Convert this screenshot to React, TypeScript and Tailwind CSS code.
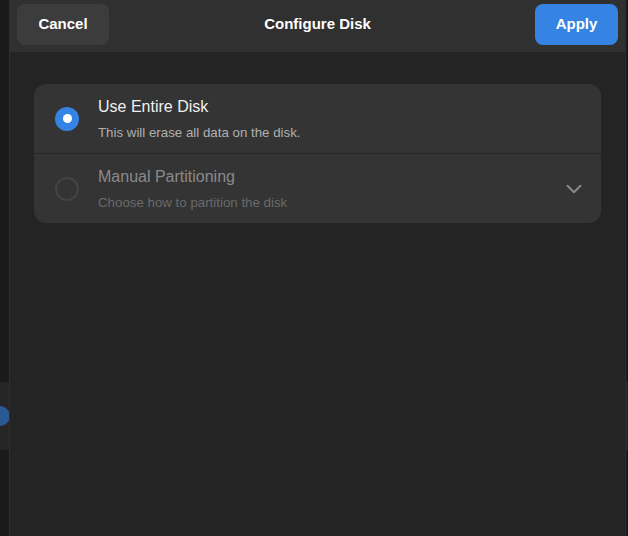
import { ChevronDown } from "lucide-react";

const font = { fontFamily: '"Liberation Sans", Arial, sans-serif' };

interface OptionRowProps {
  title: string;
  subtitle: string;
  selected?: boolean;
  disabled?: boolean;
  expandable?: boolean;
}

function OptionRow({ title, subtitle, selected, disabled, expandable }: OptionRowProps) {
  return (
    <div className="flex items-center h-[69px] pl-[21px] pr-[14px]">
      {selected ? (
        <div className="w-6 h-6 rounded-full bg-[#3584e4] flex items-center justify-center shrink-0">
          <div className="w-[9px] h-[9px] rounded-full bg-white" />
        </div>
      ) : (
        <div className="w-6 h-6 rounded-full border-2 border-[#444444] shrink-0" />
      )}
      <div className="ml-[19px] flex-1 flex flex-col">
        <span className={disabled ? "text-[16px] leading-[19px] text-[#8a8a8a]" : "text-[16px] leading-[19px] text-[#f0f0f0]"}>
          {title}
        </span>
        <span className={disabled ? "mt-[9px] text-[13.3px] leading-[15px] text-[#6a6a6a]" : "mt-[9px] text-[13.3px] leading-[15px] text-[#b0b0b0]"}>
          {subtitle}
        </span>
      </div>
      {expandable && <ChevronDown className="w-[26px] h-[26px] text-[#8a8a8a]" strokeWidth={1.8} />}
    </div>
  );
}

export default function App() {
  return (
    <div className="relative w-[628px] h-[536px] bg-[#1a1a1a] overflow-hidden" style={font}>
      {/* list row behind the dialog */}
      <div className="absolute left-0 right-0 top-[382px] h-[68px] bg-[#262626] flex items-center">
        <div className="-ml-[10px] w-5 h-5 rounded-full bg-[#2a5a96]" />
      </div>

      {/* dialog */}
      <div className="absolute left-[9px] top-0 w-[617px] h-[536px] bg-[#242424] border-x border-[#2e2e2e] flex flex-col">
        <div className="h-[52px] bg-[#303030] grid grid-cols-[1fr_auto_1fr] items-center px-[7px] pb-[3px]">
          <button className="justify-self-start w-[92px] h-[41px] rounded-lg bg-[#3c3c3c] text-white text-[15px] font-bold">
            Cancel
          </button>
          <span className="text-white text-[15px] font-bold">Configure Disk</span>
          <button className="justify-self-end w-[83px] h-[41px] rounded-lg bg-[#3584e4] text-white text-[15px] font-bold">
            Apply
          </button>
        </div>

        <div className="px-[24px] pt-[32px]">
          <div className="rounded-xl bg-[#343434] overflow-hidden">
            <OptionRow
              title="Use Entire Disk"
              subtitle="This will erase all data on the disk."
              selected
            />
            <div className="h-px bg-[#262626]" />
            <OptionRow
              title="Manual Partitioning"
              subtitle="Choose how to partition the disk"
              disabled
              expandable
            />
          </div>
        </div>
      </div>
    </div>
  );
}
